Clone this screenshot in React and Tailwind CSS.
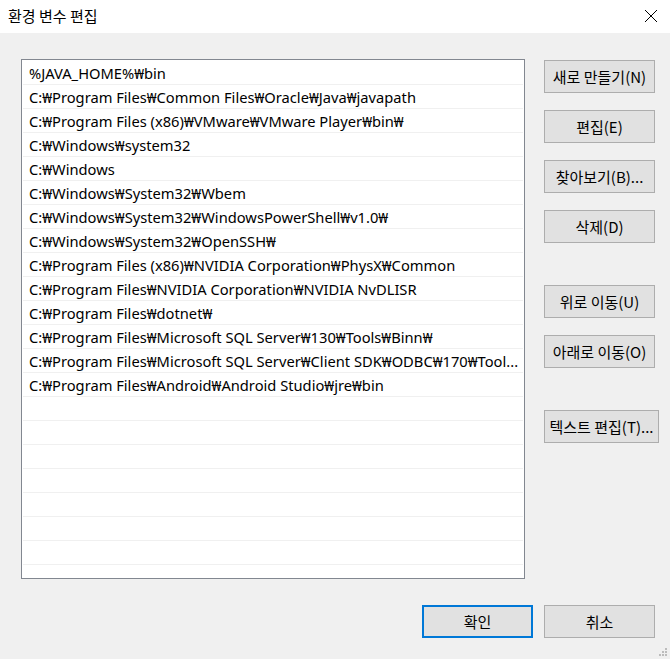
import React from "react";

const PATHS = [
  "%JAVA_HOME%₩bin",
  "C:₩Program Files₩Common Files₩Oracle₩Java₩javapath",
  "C:₩Program Files (x86)₩VMware₩VMware Player₩bin₩",
  "C:₩Windows₩system32",
  "C:₩Windows",
  "C:₩Windows₩System32₩Wbem",
  "C:₩Windows₩System32₩WindowsPowerShell₩v1.0₩",
  "C:₩Windows₩System32₩OpenSSH₩",
  "C:₩Program Files (x86)₩NVIDIA Corporation₩PhysX₩Common",
  "C:₩Program Files₩NVIDIA Corporation₩NVIDIA NvDLISR",
  "C:₩Program Files₩dotnet₩",
  "C:₩Program Files₩Microsoft SQL Server₩130₩Tools₩Binn₩",
  "C:₩Program Files₩Microsoft SQL Server₩Client SDK₩ODBC₩170₩Tool...",
  "C:₩Program Files₩Android₩Android Studio₩jre₩bin",
];

const ROWS = [...PATHS, ...Array(8).fill("")];

const FONT = "font-['Noto_Sans','Noto_Sans_CJK_KR',sans-serif]";

function Btn({ children, className = "" }) {
  return (
    <button
      className={`h-[33px] bg-[#e1e1e1] border border-[#adadad] text-[15px] text-black leading-none whitespace-nowrap flex items-center justify-center ${className}`}
    >
      {children}
    </button>
  );
}

export default function App() {
  return (
    <div className={`w-[670px] h-[659px] bg-[#f0f0f0] flex flex-col relative ${FONT}`}>
      {/* Title bar */}
      <div className="h-[33px] bg-white flex items-center justify-between pl-[8px] pr-[12px]">
        <span className="text-[15px] text-black font-['Noto_Sans_CJK_KR',sans-serif] -mt-[1px]">환경 변수 편집</span>
        <svg width="14" height="14" viewBox="0 0 14 14" className="-mt-[1px]">
          <path d="M1 1 L13 13 M13 1 L1 13" stroke="#000" strokeWidth="1" fill="none" />
        </svg>
      </div>

      {/* Content */}
      <div className="flex pt-[26px] pl-[21px]">
        <div className="w-[504px] h-[520px] border border-[#828790] bg-white overflow-hidden pt-px px-px">
          {ROWS.map((p, i) => (
            <div
              key={i}
              className="h-[24px] border-b border-[#f0f0f0] pl-[6px] pr-[2px] flex items-center text-[14.7px] text-black whitespace-nowrap overflow-hidden"
            >
              <span className="mt-[1px]">{p}</span>
            </div>
          ))}
        </div>

        <div className="ml-[19px] pt-[1px] flex flex-col font-['Noto_Sans_CJK_KR',sans-serif]">
          <Btn className="w-[111px]">새로 만들기(N)</Btn>
          <Btn className="w-[111px] mt-[17px]">편집(E)</Btn>
          <Btn className="w-[111px] mt-[17px]">찾아보기(B)...</Btn>
          <Btn className="w-[111px] mt-[17px]">삭제(D)</Btn>
          <Btn className="w-[111px] mt-[42px]">위로 이동(U)</Btn>
          <Btn className="w-[111px] mt-[17px]">아래로 이동(O)</Btn>
          <Btn className="w-[115px] mt-[42px]">텍스트 편집(T)...</Btn>
        </div>
      </div>

      {/* Footer */}
      <div className="flex justify-end gap-[11px] pr-[15px] mt-[26px] font-['Noto_Sans_CJK_KR',sans-serif]">
        <Btn className="w-[111px] !border-2 !border-[#0078d7]">확인</Btn>
        <Btn className="w-[111px]">취소</Btn>
      </div>

      {/* Resize grip */}
      <svg width="10" height="10" viewBox="0 0 10 10" className="absolute right-[2px] bottom-[2px]">
        <rect x="7" y="1" width="2" height="2" fill="#bcbcbc" />
        <rect x="4" y="4" width="2" height="2" fill="#bcbcbc" />
        <rect x="7" y="4" width="2" height="2" fill="#bcbcbc" />
        <rect x="1" y="7" width="2" height="2" fill="#bcbcbc" />
        <rect x="4" y="7" width="2" height="2" fill="#bcbcbc" />
        <rect x="7" y="7" width="2" height="2" fill="#bcbcbc" />
      </svg>
    </div>
  );
}
